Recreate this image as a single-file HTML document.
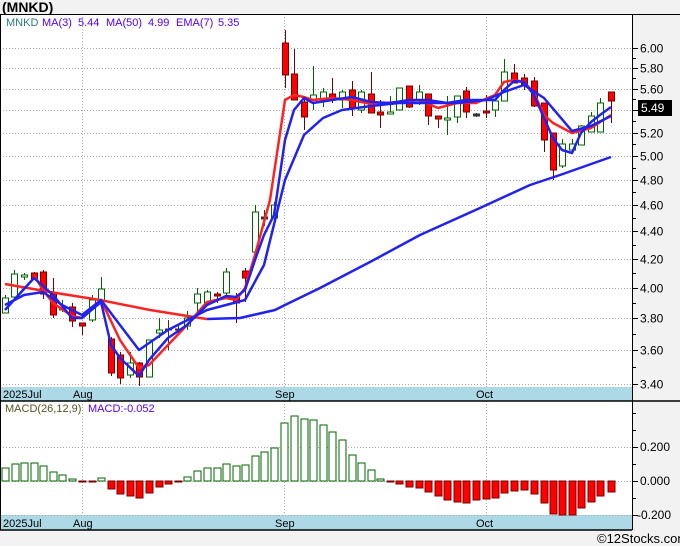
<!DOCTYPE html>
<html><head><meta charset="utf-8"><style>
html,body{margin:0;padding:0;background:#f2f2f2;width:680px;height:546px;overflow:hidden;font-family:"Liberation Sans",Verdana,sans-serif}
</style></head><body>
<svg id="s" width="680" height="546" xmlns="http://www.w3.org/2000/svg" style="position:absolute;left:0;top:0" font-family="Liberation Sans, sans-serif">
<rect x="0" y="0" width="680" height="546" fill="#f2f2f2"/>
<text x="2" y="12" font-size="14" font-weight="bold" fill="#000">(MNKD)</text>
<rect x="0" y="14" width="632" height="373" fill="#fff"/>
<rect x="0" y="401" width="632" height="114" fill="#fff"/>
<rect x="0" y="387" width="632" height="14" fill="#add8e6"/>
<rect x="0" y="515" width="632" height="15" fill="#add8e6"/>
<g id="grid" stroke="#aaa" stroke-width="1" stroke-dasharray="1,2"></g>
<g id="plot"></g>
<line x1="0" y1="14.5" x2="680" y2="14.5" stroke="#000"/>
<line x1="0" y1="401" x2="680" y2="401" stroke="#000" stroke-width="1.5"/>
<line x1="0" y1="530" x2="632" y2="530" stroke="#000" stroke-width="1.5"/>
<line x1="0.5" y1="14" x2="0.5" y2="530" stroke="#000"/>
<line x1="632.5" y1="14" x2="632.5" y2="530" stroke="#000"/>
<g font-size="11" fill="#000">
<text x="3" y="398">2025Jul</text><text x="73" y="398">Aug</text><text x="275" y="398">Sep</text><text x="476" y="398">Oct</text>
<text x="3" y="527">2025Jul</text><text x="73" y="527">Aug</text><text x="275" y="527">Sep</text><text x="476" y="527">Oct</text>
</g>
<g font-size="11"><text x="6" y="26" fill="#2a7a7a">MNKD</text><text x="42" y="26" fill="#5500ff">MA(3)</text><text x="78" y="26" fill="#5500ff">5.44</text><text x="106" y="26" fill="#5500ff">MA(50)</text><text x="148" y="26" fill="#5500ff">4.99</text><text x="176" y="26" fill="#5500ff">EMA(7)</text><text x="218" y="26" fill="#5500ff">5.35</text></g>
<g font-size="11"><text x="5" y="412" fill="#552">MACD(26,12,9)</text><text x="88" y="412" fill="#5500ff">MACD:-0.052</text></g>
<g id="axis" font-size="12" fill="#000"></g>
<rect x="638" y="100" width="34" height="16" fill="#000"/>
<text x="641" y="112" font-size="12" fill="#fff">5.49</text>
<text x="597" y="543" font-size="13" fill="#000">©12Stocks.com</text>
</svg>
<script>
var NS="http://www.w3.org/2000/svg";
function el(p,t,a,txt){var e=document.createElementNS(NS,t);for(var k in a)e.setAttribute(k,a[k]);if(txt)e.textContent=txt;document.getElementById(p).appendChild(e);return e;}
function py(p){return 48+591.5*Math.log(6/p);}
for(var i=0;i<=13;i++){var p=6-i*0.2,y=Math.round(py(p))+.5;
 el('grid','line',{x1:0,y1:y,x2:632,y2:y});
 el('axis','line',{x1:632,y1:y,x2:638,y2:y,stroke:'#000'});
 if(Math.abs(p-5.4)>0.01) el('axis','text',{x:640,y:y+4},p.toFixed(2));
 if(i<13){var ym=Math.round(py(p-0.1))+.5;el('axis','line',{x1:632,y1:ym,x2:636,y2:ym,stroke:'#000'});}
}
[82,284,486].forEach(function(x){el('grid','line',{x1:x+.5,y1:14,x2:x+.5,y2:387});el('grid','line',{x1:x+.5,y1:401,x2:x+.5,y2:515});});
[447,481,515].forEach(function(y){el('grid','line',{x1:0,y1:y+.5,x2:632,y2:y+.5});el('axis','line',{x1:632,y1:y+.5,x2:638,y2:y+.5,stroke:'#000'});});
for(var y=413;y<515;y+=17)el('axis','line',{x1:632,y1:y+.5,x2:636,y2:y+.5,stroke:'#000'});
el('axis','text',{x:640,y:451},'0.200');el('axis','text',{x:640,y:485},'0.000');el('axis','text',{x:637,y:519},'-0.200');
var C=[[5,298,313,295,313,'g'],[14,274,297,270,300,'g'],[24,275,277,273,280,'g'],[34,273,279,272,280,'r'],[43,272,294,270,299,'r'],[53,294,315,278,318,'r'],[62,308,310,300,312,'g'],[72,307,321,303,327,'r'],[82,323,326,323,335,'r'],[92,300,320,295,322,'g'],[101,289,300,277,302,'g'],[111,339,373,337,376,'r'],[120,355,378,352,384,'r'],[130,363,375,352,378,'g'],[139,363,377,362,386,'r'],[149,340,377,340,377,'g'],[159,330,333,318,338,'g'],[168,329,330,320,350,'k'],[178,329,330,324,334,'k'],[187,318,326,311,330,'g'],[197,294,303,288,313,'g'],[207,292,303,290,305,'g'],[217,294,296,292,303,'r'],[226,272,293,268,295,'g'],[236,297,303,293,323,'r'],[245,271,278,268,302,'r'],[255,212,252,205,258,'g'],[264,217,219,210,226,'k'],[274,205,218,202,220,'g'],
[285,43,75,30,88,'r'],[294,74,100,49,100,'r'],[304,102,117,98,130,'r'],[313,95,102,66,110,'g'],[323,92,100,88,107,'g'],[332,94,100,78,103,'r'],[342,92,100,90,108,'g'],[352,90,108,81,116,'r'],[361,92,110,90,113,'g'],[371,94,113,72,113,'r'],[380,112,115,100,128,'r'],[390,112,114,96,114,'g'],[399,88,110,88,110,'g'],[409,86,107,86,108,'r'],[419,92,101,85,105,'g'],[428,94,116,94,125,'r'],[438,116,119,116,128,'r'],[447,118,120,96,135,'g'],[457,96,117,96,123,'g'],[466,91,112,87,118,'r'],[476,114,116,113,117,'k'],[486,111,113,95,118,'r'],[495,101,110,100,117,'g'],[504,72,101,59,101,'g'],[514,73,83,64,83,'r'],[524,78,84,74,90,'r'],[534,81,106,77,107,'r'],[544,103,140,103,152,'r'],[553,133,170,133,180,'r'],[562,144,166,139,168,'g'],[572,144,150,139,152,'g'],[581,126,145,125,145,'g'],[591,116,132,112,132,'g'],[600,103,132,98,132,'g'],[611,92,101,92,123,'r']];
function line(pts,col,w){el('plot','polyline',{points:pts.map(function(p){return p.join(',')}).join(' '),fill:'none',stroke:col,'stroke-width':w||2.5,'stroke-linejoin':'round'});}
C.forEach(function(c){var col=c[5]=='g'?'#006400':(c[5]=='r'?'#700':'#333');
 el('plot','line',{x1:c[0]+.5,y1:c[3],x2:c[0]+.5,y2:c[4],stroke:col,'stroke-width':1});
 el('plot','rect',{x:c[0]-2.5,y:c[1],width:6,height:Math.max(1,c[2]-c[1]),fill:c[5]=='g'?'#fff':(c[5]=='r'?'#f00':'#333'),stroke:col,'stroke-width':1});});
line([[5,284],[50,292],[100,300],[150,310],[200,318],[207,319]],'#f22',2.5);
line([[207,319],[240,318],[275,310],[285,305],[320,288],[370,262],[420,235],[480,208],[530,185],[560,175],[611,157]],'#22e',2.5);
line([[34,275],[43,290],[53,303],[72,316],[82,318],[101,300],[120,340],[139,368],[149,365],[168,345],[187,325],[207,302],[226,298],[236,300],[245,288],[255,255],[270,200],[285,100],[294,95],[304,97],[313,100],[332,98],[352,100],[371,104],[399,102],[419,100],[438,108],[457,103],[476,103],[495,95],[504,82],[514,80],[524,82],[534,93],[544,115],[553,123],[572,133],[591,128],[611,115]],'#f22',2.5);
line([[5,305],[24,295],[43,292],[62,305],[82,315],[101,300],[139,350],[168,330],[207,310],[245,300],[264,265],[285,180],[304,135],[323,118],[342,110],[371,106],[399,103],[428,103],[457,103],[486,100],[504,92],[524,85],[544,98],[572,131],[591,126],[611,116]],'#22e',2.5);
line([[5,310],[14,300],[34,278],[53,295],[72,318],[82,318],[101,302],[111,345],[120,358],[139,376],[149,360],[168,338],[187,325],[207,305],[226,296],[236,297],[245,290],[255,260],[264,235],[274,215],[285,140],[294,110],[304,98],[313,103],[332,100],[352,97],[371,102],[390,103],[409,100],[428,100],[447,103],[466,100],[486,100],[495,100],[504,90],[514,81],[524,82],[534,95],[544,118],[553,138],[562,150],[572,153],[581,133],[591,122],[600,115],[611,107]],'#22e',2.5);
var H=[[5,468],[15,464],[24,463],[34,463],[43,466],[53,472],[62,475],[72,479],[82,482],[92,481],[101,478],[111,489],[120,494],[130,496],[139,498],[149,493],[159,487],[168,484],[178,482],[187,477],[197,471],[207,468],[217,468],[226,464],[236,466],[245,465],[255,456],[264,452],[274,448],[284,423],[294,416],[304,419],[313,420],[323,425],[332,432],[342,440],[352,455],[361,463],[371,470],[380,479],[390,482],[399,484],[409,487],[419,488],[428,492],[438,496],[447,500],[457,502],[466,503],[476,500],[486,499],[495,498],[504,493],[514,491],[524,490],[534,494],[544,503],[553,514],[562,515],[572,515],[581,508],[591,502],[600,496],[611,492]];
H.forEach(function(h){var pos=h[1]<481,y=pos?h[1]:481,ht=Math.max(1,Math.abs(h[1]-481));
 el('plot','rect',{x:h[0]-3,y:y,width:7,height:ht,fill:pos?'#fff':'#f00',stroke:pos?'#006400':'#700','stroke-width':1});});
</script>
</body></html>
